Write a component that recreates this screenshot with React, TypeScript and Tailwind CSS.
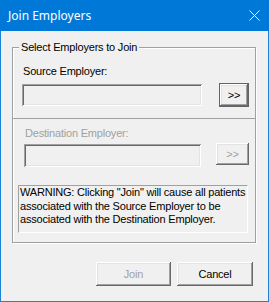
import React from "react";

const FONT = { fontFamily: '"Liberation Sans", Arial, sans-serif' };

const raised =
  "shadow-[inset_-1px_-1px_0_#696969,inset_1px_1px_0_#ffffff,inset_-2px_-2px_0_#a0a0a0,inset_2px_2px_0_#e3e3e3]";
const sunken =
  "shadow-[inset_1px_1px_0_#a0a0a0,inset_-1px_-1px_0_#ffffff,inset_2px_2px_0_#696969,inset_-2px_-2px_0_#e3e3e3]";

function CloseIcon() {
  return (
    <svg width="11" height="11" viewBox="0 0 11 11" aria-hidden="true">
      <path d="M0.5 0.5 L10.5 10.5 M10.5 0.5 L0.5 10.5" stroke="#fff" strokeWidth="1" />
    </svg>
  );
}

export default function App() {
  return (
    <div
      className="w-[269px] h-[302px] flex flex-col bg-[#f0f0f0] border-l border-r border-b border-[#1883d7] text-[11px] tracking-[-0.2px] text-black"
      style={FONT}
    >
      {/* title bar */}
      <div className="h-[31px] shrink-0 bg-[#0078d7] flex items-center justify-between pl-[8px] pr-[9px] -mx-px">
        <span
          className="text-[12px] text-white leading-none tracking-normal"
          style={{ fontFamily: '"Noto Sans", "Open Sans", sans-serif' }}
        >
          Join Employers
        </span>
        <CloseIcon />
      </div>

      {/* group box */}
      <div className="mt-[16px] ml-[11px] w-[244px] h-[196px] relative border border-[#a0a0a0] shadow-[inset_1px_1px_0_#fff,1px_1px_0_#fff]">
        <span className="absolute -top-[7px] left-[6px] bg-[#f0f0f0] px-[2px] leading-[13px]">
          Select Employers to Join
        </span>

        <div className="h-[71px] border-b border-[#a0a0a0] pt-[17px] pl-[9px]">
          <div className="leading-[13px] pl-[1px]">Source Employer:</div>
          <div className="mt-[5px] flex items-center">
            <div className={`w-[180px] h-[22px] bg-[#f0f0f0] ${sunken}`} />
            <button
              type="button"
              className={`ml-[17px] w-[30px] h-[24px] border border-[#646464] bg-[#f0f0f0] leading-none ${raised}`}
            >
              &gt;&gt;
            </button>
          </div>
        </div>

        <div className="pt-[8px]">
          <div className="leading-[13px] pl-[12px] text-[#a0a0a0]">Destination Employer:</div>
          <div className="mt-[3px] pl-[11px] flex items-start">
            <div className={`mt-[1px] w-[177px] h-[23px] bg-[#f0f0f0] ${sunken}`} />
            <button
              type="button"
              disabled
              className={`ml-[15px] w-[33px] h-[22px] bg-[#f0f0f0] text-[#a0a0a0] leading-none ${raised}`}
            >
              &gt;&gt;
            </button>
          </div>

          <div className="mt-[18px] ml-[5px] w-[230px] h-[48px] border-t border-l border-[#a0a0a0] border-r border-b border-r-white border-b-white pl-[1px] leading-[13.5px] whitespace-nowrap overflow-hidden">
            WARNING: Clicking "Join" will cause all patients
            <br />
            associated with the Source Employer to be
            <br />
            associated with the Destination Employer.
          </div>
        </div>
      </div>

      {/* buttons */}
      <div className="mt-[19px] flex justify-end gap-[6px] pr-[15px]">
        <button
          type="button"
          disabled
          className={`w-[75px] h-[24px] bg-[#f0f0f0] text-[#a0a0a0] ${raised}`}
        >
          Join
        </button>
        <button type="button" className={`w-[76px] h-[24px] bg-[#f0f0f0] ${raised}`}>
          Cancel
        </button>
      </div>
    </div>
  );
}
